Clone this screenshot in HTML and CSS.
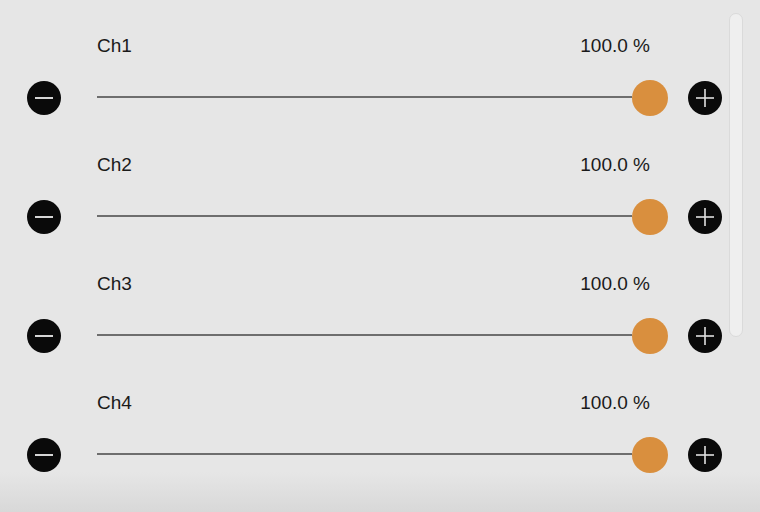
FILE: index.html
```html
<!DOCTYPE html>
<html lang="en">
<head>
    <meta charset="UTF-8">
    <meta name="viewport" content="width=device-width, initial-scale=1.0">
    <title>Channels</title>
    <link rel="stylesheet" href="styles.css">
</head>
<body>
    <div class="mixer">
        <div class="channel">
            <div class="labels"><span>Ch1</span><span>100.0 %</span></div>
            <div class="controls">
                <button class="btn"><svg viewBox="0 0 34 34"><circle cx="17" cy="17" r="17" fill="#0a0a0a"/><line x1="8" y1="17" x2="26" y2="17" stroke="#d6d6d6" stroke-width="2"/></svg></button>
                <div class="slider"><div class="track"></div><div class="thumb"></div></div>
                <button class="btn"><svg viewBox="0 0 34 34"><circle cx="17" cy="17" r="17" fill="#0a0a0a"/><line x1="8" y1="17" x2="26" y2="17" stroke="#e0e0e0" stroke-width="1.6"/><line x1="17" y1="8" x2="17" y2="26" stroke="#e0e0e0" stroke-width="1.6"/></svg></button>
            </div>
        </div>
        <div class="channel">
            <div class="labels"><span>Ch2</span><span>100.0 %</span></div>
            <div class="controls">
                <button class="btn"><svg viewBox="0 0 34 34"><circle cx="17" cy="17" r="17" fill="#0a0a0a"/><line x1="8" y1="17" x2="26" y2="17" stroke="#d6d6d6" stroke-width="2"/></svg></button>
                <div class="slider"><div class="track"></div><div class="thumb"></div></div>
                <button class="btn"><svg viewBox="0 0 34 34"><circle cx="17" cy="17" r="17" fill="#0a0a0a"/><line x1="8" y1="17" x2="26" y2="17" stroke="#e0e0e0" stroke-width="1.6"/><line x1="17" y1="8" x2="17" y2="26" stroke="#e0e0e0" stroke-width="1.6"/></svg></button>
            </div>
        </div>
        <div class="channel">
            <div class="labels"><span>Ch3</span><span>100.0 %</span></div>
            <div class="controls">
                <button class="btn"><svg viewBox="0 0 34 34"><circle cx="17" cy="17" r="17" fill="#0a0a0a"/><line x1="8" y1="17" x2="26" y2="17" stroke="#d6d6d6" stroke-width="2"/></svg></button>
                <div class="slider"><div class="track"></div><div class="thumb"></div></div>
                <button class="btn"><svg viewBox="0 0 34 34"><circle cx="17" cy="17" r="17" fill="#0a0a0a"/><line x1="8" y1="17" x2="26" y2="17" stroke="#e0e0e0" stroke-width="1.6"/><line x1="17" y1="8" x2="17" y2="26" stroke="#e0e0e0" stroke-width="1.6"/></svg></button>
            </div>
        </div>
        <div class="channel">
            <div class="labels"><span>Ch4</span><span>100.0 %</span></div>
            <div class="controls">
                <button class="btn"><svg viewBox="0 0 34 34"><circle cx="17" cy="17" r="17" fill="#0a0a0a"/><line x1="8" y1="17" x2="26" y2="17" stroke="#d6d6d6" stroke-width="2"/></svg></button>
                <div class="slider"><div class="track"></div><div class="thumb"></div></div>
                <button class="btn"><svg viewBox="0 0 34 34"><circle cx="17" cy="17" r="17" fill="#0a0a0a"/><line x1="8" y1="17" x2="26" y2="17" stroke="#e0e0e0" stroke-width="1.6"/><line x1="17" y1="8" x2="17" y2="26" stroke="#e0e0e0" stroke-width="1.6"/></svg></button>
            </div>
        </div>
    </div>

    <!-- barra de rolagem -->
    <div class="scrollbar"></div>
</body>
</html>
```

FILE: styles.css
```css
html, body {
    margin: 0;
    padding: 0;
    height: 512px;
    overflow: hidden;
}
body {
    font-family: "Liberation Sans", Arial, sans-serif;
    color: #1a1a1a;
    background: linear-gradient(to bottom, #e6e6e6 0, #e6e6e6 472px, #d8d8d8 512px);
    position: relative;
}
.mixer {
    display: flex;
    flex-direction: column;
    gap: 40px;
    padding: 35px 38px 0 27px;
}
.labels {
    display: flex;
    justify-content: space-between;
    font-size: 19px;
    line-height: 22px;
    margin: 0 72px 0 70px;
}
.controls {
    display: grid;
    grid-template-columns: 34px 1fr 34px;
    column-gap: 20px;
    align-items: center;
    margin-top: 23px;
    height: 34px;
}
.controls .slider {
    margin-left: 16px;
}
.btn {
    width: 34px;
    height: 34px;
    padding: 0;
    border: none;
    background: none;
    cursor: pointer;
}
.btn svg {
    display: block;
    width: 34px;
    height: 34px;
}
.slider {
    display: flex;
    align-items: center;
    height: 36px;
}
.track {
    flex: 1;
    height: 1.5px;
    margin-top: -2px;
    background-color: #6e6e6e;
}
.thumb {
    width: 36px;
    height: 36px;
    border-radius: 50%;
    background-color: #d98f3e;
}
.scrollbar {
    position: absolute;
    left: 729px;
    top: 13px;
    width: 12px;
    height: 322px;
    border-radius: 7px;
    background-color: #efefef;
    border: 1px solid #dadada;
}
```
